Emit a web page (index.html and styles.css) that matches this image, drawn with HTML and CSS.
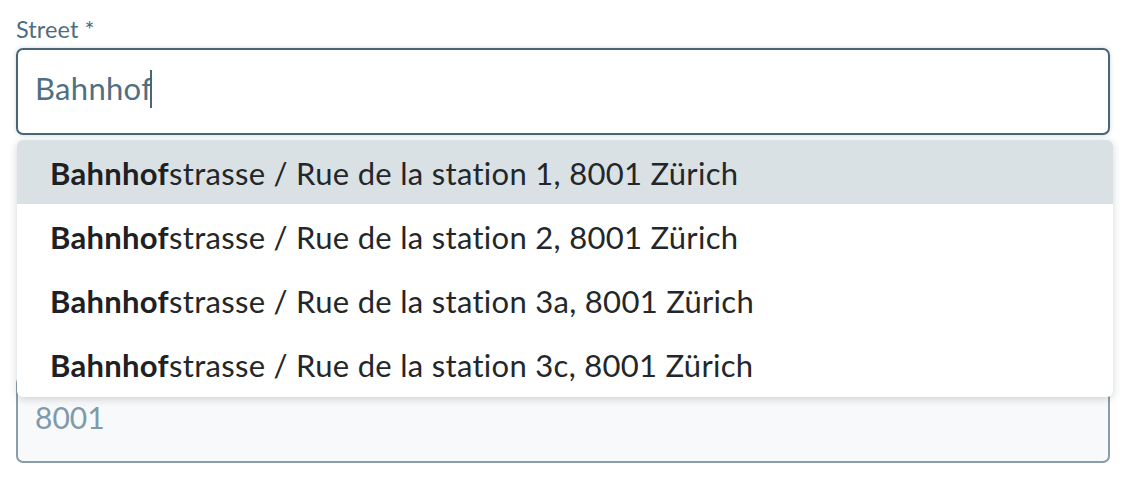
FILE: index.html
```html
<!DOCTYPE html>
<html lang="en">
<head>
<meta charset="utf-8">
<title>Address form</title>
<link rel="stylesheet" href="styles.css">
</head>
<body>
<form class="form">
  <div class="field">
    <label class="label">Street *</label>
    <div class="combo">
      <div class="input input--focus"><span class="value value--typed">Bahnhof</span><span class="caret"></span></div>
      <ul class="menu">
        <li class="option option--active"><b>Bahnhof</b>strasse / Rue de la station 1, 8001 Zürich</li>
        <li class="option"><b>Bahnhof</b>strasse / Rue de la station 2, 8001 Zürich</li>
        <li class="option"><b>Bahnhof</b>strasse / Rue de la station 3a, 8001 Zürich</li>
        <li class="option"><b>Bahnhof</b>strasse / Rue de la station 3c, 8001 Zürich</li>
      </ul>
    </div>
  </div>
  <div class="field field--postal" aria-label="Postal code">
    <div class="input input--readonly"><span class="value">8001</span></div>
  </div>
</form>
</body>
</html>
```

FILE: styles.css
```css
html, body {
  margin: 0;
  padding: 0;
  background: #ffffff;
}
body {
  font-family: Lato, "Noto Sans", sans-serif;
  padding: 15px 28px 0 16px;
}
.form {
  display: flex;
  flex-direction: column;
}
.field {
  display: flex;
  flex-direction: column;
}
.field--postal {
  margin-top: 241px;
}
.label {
  font-size: 23.5px;
  line-height: 29px;
  color: #4f6d80;
  margin-bottom: 4px;
  letter-spacing: 0.1px;
}
.combo {
  position: relative;
}
.input {
  box-sizing: border-box;
  height: 87px;
  border: 2px solid #8a9daa;
  border-radius: 7px;
  padding: 0 17px 7px;
  display: flex;
  align-items: center;
  font-size: 30px;
  color: #4f6f82;
  background: #ffffff;
}
.input--focus {
  border-color: #4a6577;
  box-shadow: 0 0 4px rgba(74, 101, 119, 0.25);
}
.input--readonly {
  background: #f8f9fa;
  color: #7f9aaa;
  padding-bottom: 6px;
}
.value {
  line-height: 36px;
}
.value--typed {
  font-size: 31px;
  letter-spacing: 0.3px;
}
.caret {
  display: inline-block;
  width: 2px;
  height: 38px;
  background: #4a6577;
  margin-left: -2px;
  margin-top: 2px;
}
.menu {
  position: absolute;
  top: 92px;
  left: 1px;
  right: -3px;
  margin: 0;
  padding: 0 0 1px;
  list-style: none;
  background: #ffffff;
  border-radius: 6px;
  box-shadow: 0 2px 9px rgba(30, 50, 60, 0.2);
  overflow: hidden;
  z-index: 2;
}
.option {
  height: 64px;
  display: flex;
  align-items: center;
  padding-left: 33px;
  padding-top: 2px;
  box-sizing: border-box;
  font-size: 31px;
  letter-spacing: 0.3px;
  color: #23272a;
  white-space: pre;
}
.option b {
  font-weight: 700;
  color: #1d2124;
}
.option--active {
  background: #dae1e5;
}
```
